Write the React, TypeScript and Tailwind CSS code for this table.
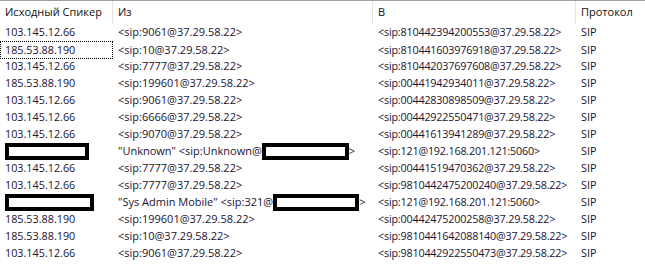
import React from 'react';

type Row = { src: string | null; from: React.ReactNode; to: string };

const Redact: React.FC<{ w: number }> = ({ w }) => (
  <span
    className="inline-block h-[17px] border-4 border-black bg-white align-middle"
    style={{ width: w }}
  />
);

const rows: Row[] = [
  { src: '103.145.12.66', from: '<sip:9061@37.29.58.22>', to: '<sip:810442394200553@37.29.58.22>' },
  { src: '185.53.88.190', from: '<sip:10@37.29.58.22>', to: '<sip:810441603976918@37.29.58.22>' },
  { src: '103.145.12.66', from: '<sip:7777@37.29.58.22>', to: '<sip:810442037697608@37.29.58.22>' },
  { src: '185.53.88.190', from: '<sip:199601@37.29.58.22>', to: '<sip:00441942934011@37.29.58.22>' },
  { src: '103.145.12.66', from: '<sip:9061@37.29.58.22>', to: '<sip:00442830898509@37.29.58.22>' },
  { src: '103.145.12.66', from: '<sip:6666@37.29.58.22>', to: '<sip:00442922550471@37.29.58.22>' },
  { src: '103.145.12.66', from: '<sip:9070@37.29.58.22>', to: '<sip:00441613941289@37.29.58.22>' },
  {
    src: null,
    from: (
      <>
        "Unknown" &lt;sip:Unknown@<Redact w={87} />&gt;
      </>
    ),
    to: '<sip:121@192.168.201.121:5060>',
  },
  { src: '103.145.12.66', from: '<sip:7777@37.29.58.22>', to: '<sip:00441519470362@37.29.58.22>' },
  { src: '103.145.12.66', from: '<sip:7777@37.29.58.22>', to: '<sip:9810442475200240@37.29.58.22>' },
  {
    src: null,
    from: (
      <>
        "Sys Admin Mobile" &lt;sip:321@<Redact w={86} />&gt;
      </>
    ),
    to: '<sip:121@192.168.201.121:5060>',
  },
  { src: '185.53.88.190', from: '<sip:199601@37.29.58.22>', to: '<sip:00442475200258@37.29.58.22>' },
  { src: '185.53.88.190', from: '<sip:10@37.29.58.22>', to: '<sip:9810441642088140@37.29.58.22>' },
  { src: '103.145.12.66', from: '<sip:9061@37.29.58.22>', to: '<sip:9810442922550473@37.29.58.22>' },
];

const cols = 'grid grid-cols-[113px_260px_203px_1fr]';

export default function App() {
  return (
    <div
      className="w-[645px] h-[273px] overflow-hidden bg-white border-t border-[#a0a0a0] text-[10.8px] text-[#1b1230]"
      style={{ fontFamily: '"Open Sans", "Noto Sans", sans-serif' }}
    >
      <div className={`${cols} h-[23px] items-center text-[11px] text-[#111]`}>
        <div className="h-full flex items-center pl-[5px] border-r border-[#e5e5e5]">Исходный Спикер</div>
        <div className="h-full flex items-center pl-[5px] border-r border-[#e5e5e5]">Из</div>
        <div className="h-full flex items-center pl-[5px] border-r border-[#e5e5e5]">В</div>
        <div className="h-full flex items-center pl-[5px]">Протокол</div>
      </div>
      {rows.map((r, i) => (
        <div key={i} className={`${cols} h-[17px] items-center whitespace-nowrap`}>
          <div
            className={`h-full flex items-center ${
              i === 1 ? 'pl-[4px] border border-dotted border-black' : 'pl-[5px]'
            } ${r.src === null ? 'pl-[2px]' : ''}`}
          >
            {r.src === null ? <Redact w={i === 7 ? 84 : 89} /> : r.src}
          </div>
          <div className="h-full flex items-center pl-[5px] text-[11px] overflow-hidden">{r.from}</div>
          <div className="h-full flex items-center pl-[5px] tracking-[-0.2px]">{r.to}</div>
          <div className="h-full flex items-center pl-[5px]">SIP</div>
        </div>
      ))}
    </div>
  );
}
